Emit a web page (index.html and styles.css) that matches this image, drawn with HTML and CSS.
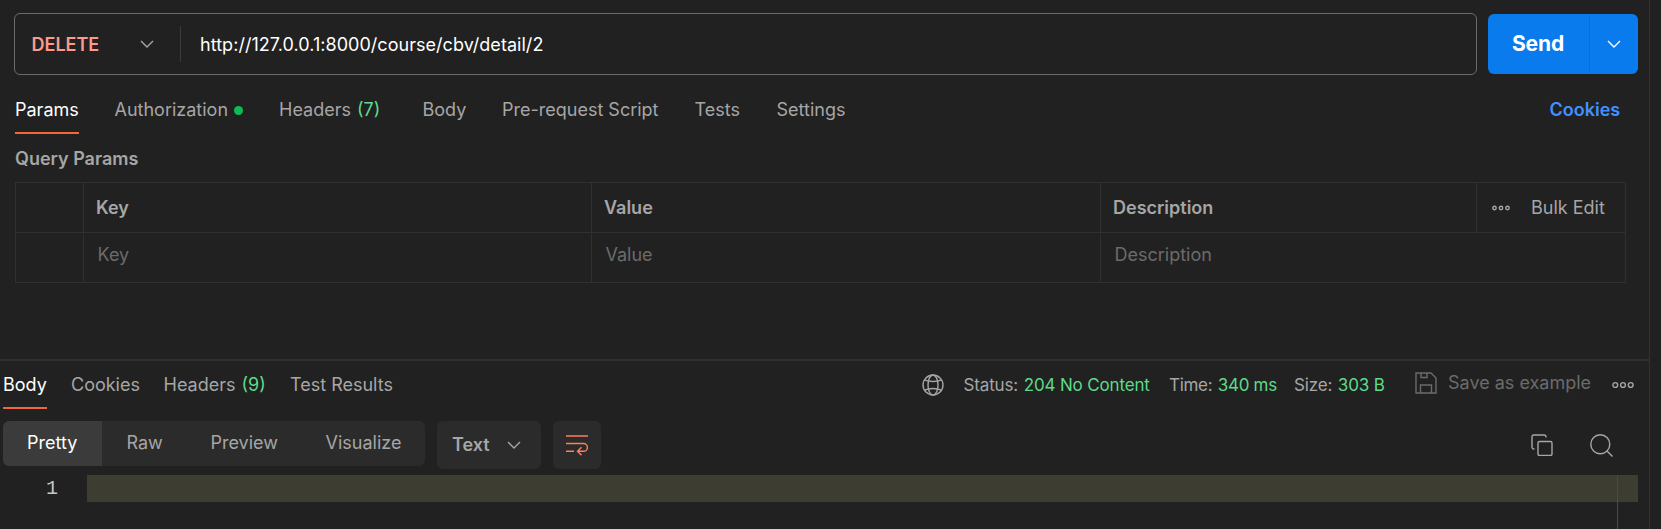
FILE: index.html
```html
<!DOCTYPE html>
<html lang="en">
<head>
<meta charset="utf-8">
<title>API client</title>
<link rel="stylesheet" href="styles.css">
</head>
<body>
<div class="app">
  <main class="pane">
    <div class="request-bar">
      <div class="url-box">
        <div class="method"><span>DELETE</span>
          <svg width="14" height="8" viewBox="0 0 14 8"><path d="M1 1l6 6 6-6"/></svg>
        </div>
        <div class="url">http://127.0.0.1:8000/course/cbv/detail/2</div>
      </div>
      <div class="send">
        <div class="send-label">Send</div>
        <div class="send-more"><svg width="14" height="8" viewBox="0 0 14 8"><path d="M1 1l6 6 6-6"/></svg></div>
      </div>
    </div>

    <nav class="tabs request-tabs">
      <div class="tab"><span class="active">Params</span></div>
      <div class="tab">Authorization<i class="dot"></i></div>
      <div class="tab">Headers <b class="count">(7)</b></div>
      <div class="tab">Body</div>
      <div class="tab">Pre-request Script</div>
      <div class="tab">Tests</div>
      <div class="tab">Settings</div>
      <div class="tab link">Cookies</div>
    </nav>

    <h2 class="section-title">Query Params</h2>
    <div class="params">
      <div class="row head">
        <div class="cell"></div>
        <div class="cell">Key</div>
        <div class="cell">Value</div>
        <div class="cell">Description</div>
        <div class="cell tools">
          <svg width="18" height="6" viewBox="0 0 18 6"><circle cx="2.5" cy="3" r="1.7"/><circle cx="9" cy="3" r="1.7"/><circle cx="15.5" cy="3" r="1.7"/></svg>
          <span>Bulk Edit</span>
        </div>
      </div>
      <div class="row entry">
        <div class="cell"></div>
        <div class="cell">Key</div>
        <div class="cell">Value</div>
        <div class="cell">Description</div>
      </div>
    </div>

    <section class="response">
      <div class="response-bar">
        <nav class="tabs response-tabs">
          <div class="tab"><span class="active">Body</span></div>
          <div class="tab">Cookies</div>
          <div class="tab">Headers <b class="count">(9)</b></div>
          <div class="tab">Test Results</div>
        </nav>
        <div class="meta">
          <svg width="22" height="22" viewBox="0 0 22 22"><circle cx="11" cy="11" r="10"/><ellipse cx="11" cy="11" rx="5" ry="10"/><path d="M2.6 5.8C7.4 8 14.6 8 19.4 5.8M2.6 16.2C7.4 14 14.6 14 19.4 16.2"/></svg>
          <div class="stat">Status: <b>204 No Content</b></div>
          <div class="stat">Time: <b>340 ms</b></div>
          <div class="stat">Size: <b>303 B</b></div>
          <div class="save">
            <svg width="22" height="22" viewBox="0 0 22 22"><path d="M1 1h15l5 5v15H1zM6 1v4.500h6V1M5.500 21v-8h11v8"/></svg>
            <span>Save as example</span>
          </div>
          <svg width="22" height="8" viewBox="0 0 22 8"><circle cx="3.300" cy="4" r="2.400"/><circle cx="11" cy="4" r="2.400"/><circle cx="18.700" cy="4" r="2.400"/></svg>
        </div>
      </div>

      <div class="toolbar">
        <div class="segments">
          <div class="seg on">Pretty</div>
          <div class="seg">Raw</div>
          <div class="seg">Preview</div>
          <div class="seg">Visualize</div>
        </div>
        <div class="format"><span>Text</span><svg width="14" height="8" viewBox="0 0 14 8"><path d="M1 1l6 6 6-6"/></svg></div>
        <div class="wrap"><svg width="22" height="22" viewBox="0 0 22 22"><path d="M0 2h22M0 9.500h17.500a3.900 3.900 0 0 1 0 7.800H12M0 17.300h8M15.500 13.300l-4 4 4 4"/></svg></div>
        <div class="actions">
          <svg width="22" height="22" viewBox="0 0 22 22"><rect x="7" y="7.500" width="14" height="14" rx="1.500"/><path d="M3.500 15H3a2 2 0 0 1-2-2V2.700A1.700 1.700 0 0 1 2.700 1H13a2 2 0 0 1 2 2v.5"/></svg>
          <svg width="23" height="23" viewBox="0 0 23 23"><circle cx="10.300" cy="10.300" r="9.500"/><path d="M17 17l5.500 5.500"/></svg>
        </div>
      </div>

      <div class="editor">
        <div class="line-no">1</div>
        <div class="code"><div class="highlight"></div><div class="ruler"></div></div>
      </div>
    </section>
  </main>
  <aside class="gutter"></aside>
</div>
</body>
</html>
```

FILE: styles.css
```css
* { box-sizing: border-box; }
html { height: 529px; overflow: hidden; }
body {
  margin: 0;
  height: 529px;
  overflow: hidden;
  background: #212121;
  color: #a6a6a6;
  font: 18px/24px Inter, "Liberation Sans", sans-serif;
}
svg { display: block; flex: none; fill: none; stroke: #a6a6a6; stroke-width: 1.4; }
.app { display: flex; height: 529px; overflow: hidden; white-space: nowrap; }
.pane { width: 1649px; }
.gutter { flex: 1; border-left: 1px solid #333; }

.request-bar { display: flex; gap: 11px; padding: 13px 0 0 14px; align-items: center; }
.url-box { display: flex; align-items: center; width: 1463px; height: 62px; border: 1px solid #6b6b6b; border-radius: 6px; }
.method { display: flex; align-items: center; justify-content: space-between; width: 166px; height: 36px; padding: 0 26px 0 16.5px; border-right: 1px solid #3d3d3d; color: #ff9a8a; font-weight: 600; }
.method span { width: 68px; padding-top: 2px; }
.url { padding: 2px 0 0 19px; color: #fff; letter-spacing: 0.04px; }
.send { display: flex; width: 150px; height: 60px; border-radius: 6px; background: #097bed; color: #fff; }
.send-label { width: 102px; padding-left: 24px; border-right: 1px solid #0a6fd6; font-size: 21px; font-weight: 700; letter-spacing: -0.15px; line-height: 60px; }
.send-more { display: flex; flex: 1; align-items: center; justify-content: center; }
.send svg { stroke: #fff; }

.tabs { display: grid; }
.tab { display: flex; }
.active { height: 36px; border-bottom: 2px solid #f0683a; color: #fff; }
.count { margin-left: 6px; color: #5cdb8a; font-weight: 400; }
.request-tabs { grid-template-columns: 99.5px 164.5px 143.5px 79.5px 192.5px 82px 773px auto; padding: 23px 0 0 15px; }
.dot { width: 9px; height: 9px; margin: 8px 0 0 5.5px; border-radius: 50%; background: #0cbb52; }
.link { color: #4290ff; font-weight: 600; }

.section-title { margin: 13px 0 11px 15px; font-size: 18px; font-weight: 600; line-height: 24px; }
.params { width: 1611px; margin-left: 15px; border: 1px solid #303030; }
.row { display: grid; grid-template-columns: 68px 508px 509px 376px 1fr; height: 49px; }
.entry { grid-template-columns: 68px 508px 509px 1fr; height: 50px; border-top: 1px solid #303030; color: #6b6b6b; }
.cell { padding-left: 12px; border-right: 1px solid #303030; line-height: 49px; }
.cell:last-child { border-right: 0; }
.head { font-weight: 600; }
.entry .cell { padding-left: 13.5px; line-height: 44px; }
.row .tools { display: flex; gap: 21px; align-items: center; padding-left: 15px; font-weight: 400; }

.response { margin-top: 76px; border-top: 2px solid #303030; }
.response-bar { display: flex; padding: 12px 0 0 3px; }
.response-tabs { grid-template-columns: 68px 92.5px 126.5px 632px; }
.meta { display: grid; grid-template-columns: 41.5px 205.5px 125px 121px 197px auto; height: 24px; align-items: center; }
.stat { font-size: 17px; letter-spacing: -0.15px; }
.stat b { margin-left: 1px; color: #5cdb8a; font-weight: 400; }
.stat:nth-of-type(2) { letter-spacing: -0.3px; }
.save { display: flex; gap: 11px; align-items: center; margin-top: -4px; color: #6b6b6b; }
.save svg { stroke: #6b6b6b; }

.toolbar { display: flex; gap: 12px; height: 48px; margin: 12px 0 6px 3px; }
.segments { display: grid; grid-template-columns: 99px 84px 115px 124px; width: 422px; height: 45px; overflow: hidden; border-radius: 6px; background: #2b2b2b; line-height: 44px; }
.seg { padding-left: 24.5px; }
.on { padding-left: 24px; background: #3b3b3b; color: #fff; }
.format, .wrap { display: flex; align-items: center; height: 48px; border-radius: 6px; background: #2b2b2b; }
.format { justify-content: space-between; width: 104px; padding: 0 20px 0 15px; font-weight: 600; }
.wrap { width: 48px; justify-content: center; }
.wrap svg { stroke: #ff7f5c; }
.actions { display: flex; flex: 1; gap: 37px; align-items: center; justify-content: flex-end; padding-right: 36px; }

.editor { display: flex; height: 54px; }
.line-no { width: 87px; padding-left: 46px; color: #c6c6c6; font: 20px/28px "Liberation Mono", monospace; }
.code { display: grid; width: 1551px; }
.highlight { grid-area: 1 / 1; height: 27px; background: #3e3d32; }
.ruler { grid-area: 1 / 1; width: 21px; height: 54px; justify-self: end; border-left: 1px solid #4b4b45; }
```
